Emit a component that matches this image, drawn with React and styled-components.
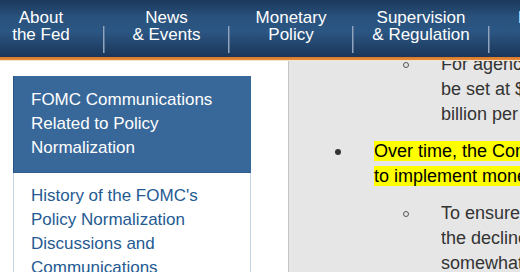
import React from 'react';
import styled, { createGlobalStyle } from 'styled-components';

const GlobalStyle = createGlobalStyle`
  html, body {
    margin: 0;
    padding: 0;
    background: #ffffff;
    overflow: hidden;
  }
  body {
    font-family: "Liberation Sans", Arial, sans-serif;
  }
`;

const Page = styled.div`
  width: 520px;
  height: 272px;
  display: flex;
  flex-direction: column;
  overflow: hidden;
`;

const Header = styled.header`
  flex: 0 0 auto;
  height: 57px;
  background: linear-gradient(#1c385b 0%, #29527d 30%, #2b5683 55%, #1b3659 100%);
  display: flex;
  overflow: hidden;
`;

const Nav = styled.nav`
  display: flex;
  margin-left: -21px;
`;

const NavItem = styled.a`
  flex: 0 0 ${(p) => p.$width}px;
  padding-top: 9px;
  color: #ffffff;
  font-size: 17px;
  line-height: 17px;
  text-align: center;
  text-decoration: none;
  white-space: nowrap;
`;

const Divider = styled.span`
  flex: 0 0 2px;
  align-self: flex-end;
  height: 27px;
  margin-bottom: 4px;
  background: linear-gradient(90deg, #8ea4bf 50%, #5a7596 50%);
`;

const OrangeRule = styled.div`
  flex: 0 0 auto;
  height: 3px;
  background: linear-gradient(#d9782a, #e68d3c);
  border-bottom: 1px solid #f4e4d2;
`;

const Main = styled.main`
  flex: 1 1 auto;
  display: grid;
  grid-template-columns: 288px 1fr;
  min-height: 0;
`;

const Sidebar = styled.aside`
  background: #ffffff;
  padding: 15px 0 0 13px;
  overflow: hidden;
`;

const SideBox = styled.div`
  width: 238px;
`;

const SideHeading = styled.div`
  background: #386899;
  border-left: 1px solid #275384;
  border-bottom: 1px solid #2d5c8d;
  padding: 12px 12px 12px 17px;
  color: #ffffff;
  font-size: 17px;
  line-height: 24px;
`;

const SideLinks = styled.div`
  border-left: 1px solid #c5d3e2;
  border-right: 1px solid #c5d3e2;
  padding: 11px 12px 0 17px;
`;

const SideLink = styled.a`
  display: block;
  color: #245a92;
  font-size: 17px;
  line-height: 24px;
  text-decoration: none;
`;

const Content = styled.section`
  background: #e6e6e6;
  border-left: 1px solid #c4c4c4;
  padding-left: 13px;
  overflow: hidden;
  color: #333333;
  font-size: 18px;
  line-height: 25px;
`;

const Scroll = styled.div`
  margin-top: -9px;
`;

const List = styled.ul`
  list-style: none;
  margin: 0;
  padding: 0;
  margin-left: ${(p) => p.$indent || 0}px;
  margin-top: ${(p) => p.$gap || 0}px;
`;

const Item = styled.li`
  display: grid;
  grid-template-columns: ${(p) => p.$marker}px auto;
  margin-bottom: 12px;
`;

const Marker = styled.span`
  height: 25px;
  display: flex;
  align-items: center;
  padding-left: ${(p) => p.$pad}px;
`;

const Disc = styled.span`
  width: 6px;
  height: 6px;
  border-radius: 50%;
  background: #333333;
`;

const Circle = styled.span`
  width: 4px;
  height: 4px;
  border-radius: 50%;
  border: 1px solid #555555;
`;

const Body = styled.div`
  min-width: 0;
`;

const Line = styled.span`
  display: block;
  white-space: nowrap;
`;

const Mark = styled.mark`
  background: #ffff00;
  color: #000000;
`;

const navItems = [
  { width: 124, top: 'About', bottom: 'the Fed' },
  { width: 123, top: 'News', bottom: '& Events' },
  { width: 122, top: 'Monetary', bottom: 'Policy' },
  { width: 134, top: 'Supervision', bottom: '& Regulation' },
  { width: 124, top: 'Financial', bottom: 'Stability' },
];

function SubItem({ lines }) {
  return (
    <Item $marker={67}>
      <Marker $pad={29}>
        <Circle />
      </Marker>
      <Body>
        {lines.map((l) => (
          <Line key={l}>{l}</Line>
        ))}
      </Body>
    </Item>
  );
}

export default function App() {
  return (
    <>
      <GlobalStyle />
      <Page>
        <Header>
          <Nav>
            {navItems.map((item, i) => (
              <React.Fragment key={item.top}>
                {i > 0 && <Divider />}
                <NavItem href="#" $width={item.width}>
                  {item.top}
                  <br />
                  {item.bottom}
                </NavItem>
              </React.Fragment>
            ))}
          </Nav>
        </Header>
        <OrangeRule />
        <Main>
          <Sidebar>
            <SideBox>
              <SideHeading>
                FOMC Communications
                <br />
                Related to Policy
                <br />
                Normalization
              </SideHeading>
              <SideLinks>
                <SideLink href="#">
                  History of the FOMC's
                  <br />
                  Policy Normalization
                  <br />
                  Discussions and
                  <br />
                  Communications
                </SideLink>
              </SideLinks>
            </SideBox>
          </Sidebar>
          <Content>
            <Scroll>
              <List $indent={72}>
                <SubItem
                  lines={[
                    'For agency debt and agency mortgage-backed securities, the cap will',
                    'be set at $4 billion per month initially and will increase in steps of $4',
                    'billion per month at three-month intervals over a period of one year.',
                  ]}
                />
              </List>
              <List>
                <Item $marker={72}>
                  <Marker $pad={33}>
                    <Disc />
                  </Marker>
                  <Body>
                    <Line>
                      <Mark>Over time, the Committee intends to maintain securities holdings in amounts needed</Mark>
                    </Line>
                    <Line>
                      <Mark>to implement monetary policy efficiently and effectively.</Mark>
                    </Line>
                    <List $gap={12}>
                      <SubItem
                        lines={[
                          'To ensure a smooth transition, the Committee intends to slow and then stop',
                          'the decline in the size of the balance sheet when reserves are',
                          'somewhat above the level it judges to be consistent with ample reserves.',
                        ]}
                      />
                    </List>
                  </Body>
                </Item>
              </List>
            </Scroll>
          </Content>
        </Main>
      </Page>
    </>
  );
}
